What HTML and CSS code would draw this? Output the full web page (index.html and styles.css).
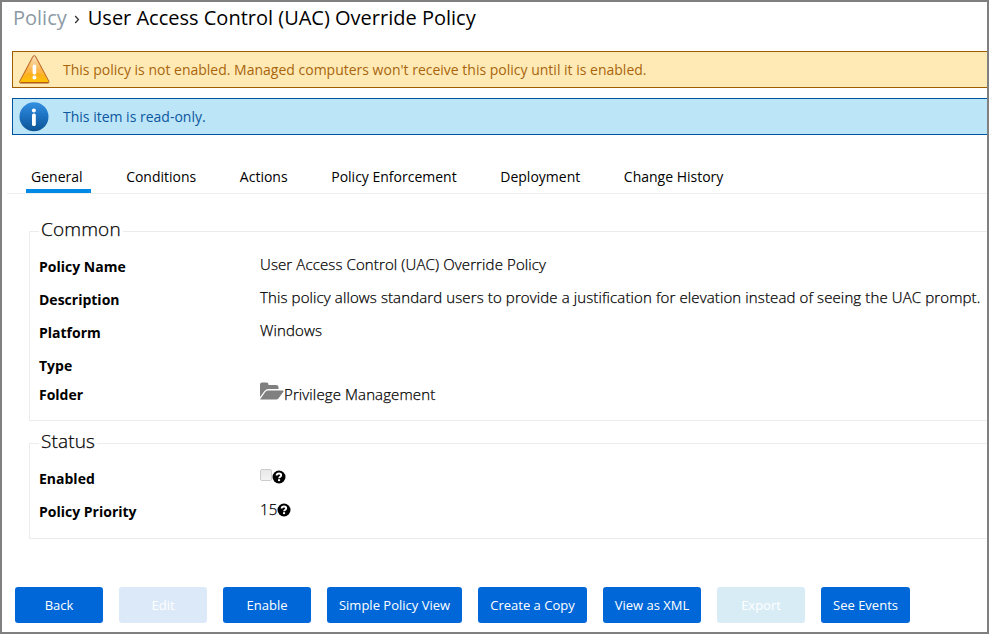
FILE: index.html
```html
<!DOCTYPE html>
<html lang="en">
<head>
<meta charset="utf-8">
<title>User Access Control (UAC) Override Policy</title>
<link rel="stylesheet" href="styles.css">
</head>
<body>
<svg class="defs" aria-hidden="true">
  <symbol id="help" viewBox="0 0 14 14">
    <circle cx="7" cy="7" r="6.500" fill="#000"/>
    <path d="M4.600 5.500C4.800 3.900 5.800 3.500 7 3.500c1.300 0 2.200.7 2.200 1.800C9.200 6.700 7.100 6.700 7.100 8.300" fill="none" stroke="#fff" stroke-width="1.900"/>
    <rect x="6" y="9.200" width="2.100" height="1.900" fill="#fff"/>
  </symbol>
</svg>
<div class="frame">
  <h1 class="crumbs"><a class="crumb-link">Policy</a><svg class="chevron" viewBox="0 0 6 9"><path d="M1.200 1L4.400 4.500L1.200 8"/></svg><span>User Access Control (UAC) Override Policy</span></h1>

  <div class="alert warning">
    <svg class="alert-icon" viewBox="0 0 36 35">
      <defs>
        <linearGradient id="wg" x1="0" y1="0" x2="0" y2="1"><stop offset="0" stop-color="#f3cf9c"/><stop offset=".5" stop-color="#fba62e"/><stop offset="1" stop-color="#ffc400"/></linearGradient>
        <linearGradient id="wl" x1="0" y1="0" x2="0" y2="1"><stop offset="0" stop-color="#fbe9c8" stop-opacity=".7"/><stop offset="1" stop-color="#ffc56a" stop-opacity=".3"/></linearGradient>
      </defs>
      <path d="M18.300 3.600Q19.300 3.600 19.900 5L33 29.500Q33.400 31 32 31H4.500Q3.200 31 3.600 29.500L16.600 5Q17.300 3.600 18.300 3.600Z" fill="url(#wg)" stroke="#b9652a"/>
      <path d="M18.300 4.600L28.500 23Q17 17.500 8.500 23Z" fill="url(#wl)"/>
      <path d="M4.500 30.600H32.200" stroke="#a95a10" stroke-width="1"/>
      <rect x="16.600" y="12.500" width="3.600" height="10" rx="1.500" fill="#fff"/><circle cx="18.400" cy="25.600" r="2" fill="#fff"/>
    </svg>
    <span>This policy is not enabled. Managed computers won't receive this policy until it is enabled.</span>
  </div>
  <div class="alert info">
    <svg class="alert-icon" viewBox="0 0 36 35">
      <defs><linearGradient id="ig" x1="0" y1="0" x2="0" y2="1"><stop offset="0" stop-color="#338fe0"/><stop offset=".5" stop-color="#1c70c0"/><stop offset="1" stop-color="#0d5494"/></linearGradient></defs>
      <circle cx="18" cy="17.800" r="14.500" fill="url(#ig)"/>
      <circle cx="17.900" cy="11.500" r="2" fill="#fff"/><rect x="16" y="14.500" width="3.800" height="12.600" rx="1.700" fill="#fff"/>
    </svg>
    <span>This item is read-only.</span>
  </div>

  <nav class="tabs">
    <a class="tab active">General</a><a class="tab">Conditions</a><a class="tab">Actions</a><a class="tab">Policy Enforcement</a><a class="tab">Deployment</a><a class="tab">Change History</a>
  </nav>

  <section class="group common">
    <h2 class="legend">Common</h2>
    <div class="row"><b>Policy Name</b><span>User Access Control (UAC) Override Policy</span></div>
    <div class="row"><b>Description</b><span>This policy allows standard users to provide a justification for elevation instead of seeing the UAC prompt.</span></div>
    <div class="row"><b>Platform</b><span>Windows</span></div>
    <div class="row short"><b>Type</b></div>
    <div class="row folder-row"><b>Folder</b><span class="value"><svg class="folder" viewBox="0 0 24 18"><path d="M0 15V2.500Q0 .5 2 .5H6.500Q8.500 .5 8.500 2.500V3H16Q18.500 3 18.500 5V7H8.500Q6 7 4.500 9Z"/><path d="M0 17.500L5.200 10Q6.200 8.500 8 8.500H22.500Q24.200 8.500 23.200 10L18.800 16Q17.800 17.500 16 17.500Z"/></svg><span class="folder-name">Privilege Management</span></span></div>
  </section>

  <section class="group status">
    <h2 class="legend">Status</h2>
    <div class="row"><b>Enabled</b><span class="value"><i class="check"></i><svg class="help"><use href="#help"/></svg></span></div>
    <div class="row"><b>Policy Priority</b><span class="value">15<svg class="help"><use href="#help"/></svg></span></div>
  </section>

  <div class="actions">
    <button class="btn w88">Back</button>
    <button class="btn w88 off-blue">Edit</button>
    <button class="btn w88">Enable</button>
    <button class="btn w135">Simple Policy View</button>
    <button class="btn w109">Create a Copy</button>
    <button class="btn w98">View as XML</button>
    <button class="btn w88 off-cyan">Export</button>
    <button class="btn w89">See Events</button>
  </div>
</div>
</body>
</html>
```
FILE: styles.css
```css
* { box-sizing: border-box; }
body { margin: 0; background: #fff; color: #000; font: 14px/20px "Open Sans", sans-serif; }
.defs { display: none; }
.frame { width: 989px; height: 634px; border: 2px solid #808080; overflow: hidden; white-space: nowrap; display: flex; flex-direction: column; }
.crumbs { display: flex; align-items: center; margin: 2px 0 0 11px; height: 28px; flex: none; font-size: 20px; font-weight: 400; line-height: 28px; }
.crumb-link { color: #8c9aa5; }
.chevron { width: 6px; height: 9px; margin: 2px 8px 0 7px; fill: none; stroke: #333; stroke-width: 1.300; }

.alert { display: flex; align-items: center; flex: none; height: 37px; margin-left: 10px; border: 1px solid; border-right: 0; }
.alert-icon { width: 36px; height: 35px; margin-left: 3px; margin-right: 11px; }
.warning { margin-top: 19px; color: #a8650c; background: #ffeab6; border-color: #a15c00; }
.info { margin-top: 10px; color: #0b57a0; background: #bce5f7; border-color: #00549f; }

.tabs { display: flex; flex: none; gap: 30.600px; height: 34px; margin: 25px 0 0 5px; padding-left: 19px; border-bottom: 1px solid #eceef0; }
.tab { height: 33px; padding: 7px 8px 0 5px; }
.tab.active { border-bottom: 4px solid #008ae6; }

.group { flex: none; margin-left: 27px; padding-left: 9px; border: 1px solid #e9edf0; border-right: 0; }
.common { height: 190px; margin-top: 37px; }
.status { height: 96px; margin-top: 22px; }
.legend { width: fit-content; margin: -16px 0 9px; padding: 0 2px; background: #fff; font-size: 19px; line-height: 26px; font-weight: 300; letter-spacing: .15px; -webkit-text-stroke: .25px #000; }
.row { display: grid; grid-template-columns: 221px auto; height: 33px; align-items: start; }
.row b { font-weight: 700; padding-top: 6px; }
.row > span { padding-top: 3px; font-size: 15px; font-weight: 300; letter-spacing: .117px; -webkit-text-stroke: .25px #000; }
.row.short { height: 29px; }
.value { display: flex; }
.folder { width: 24px; height: 18px; fill: #808080; }
.folder-name { padding-top: 2px; }
.help { width: 14px; height: 14px; margin: 4px 0 0 -.7px; }
.check { width: 12px; height: 12px; margin: 3px 1px 0 0; border: 1px solid #ccc; border-radius: 2px; background: linear-gradient(#e8e8e8, #f3f3f3); }

.actions { display: flex; gap: 16px; margin: 48px 0 0 13px; }
.btn { height: 36px; padding: 0; border: 0; border-radius: 3px; background: #0067d8; color: #fff; font: 13px/20px "Open Sans", sans-serif; }
.w88 { width: 88px; }
.w89 { width: 89px; }
.w98 { width: 98px; }
.w109 { width: 109px; }
.w135 { width: 135px; }
.off-blue { background: #dce9f8; }
.off-cyan { background: #d8ecf6; }
```
